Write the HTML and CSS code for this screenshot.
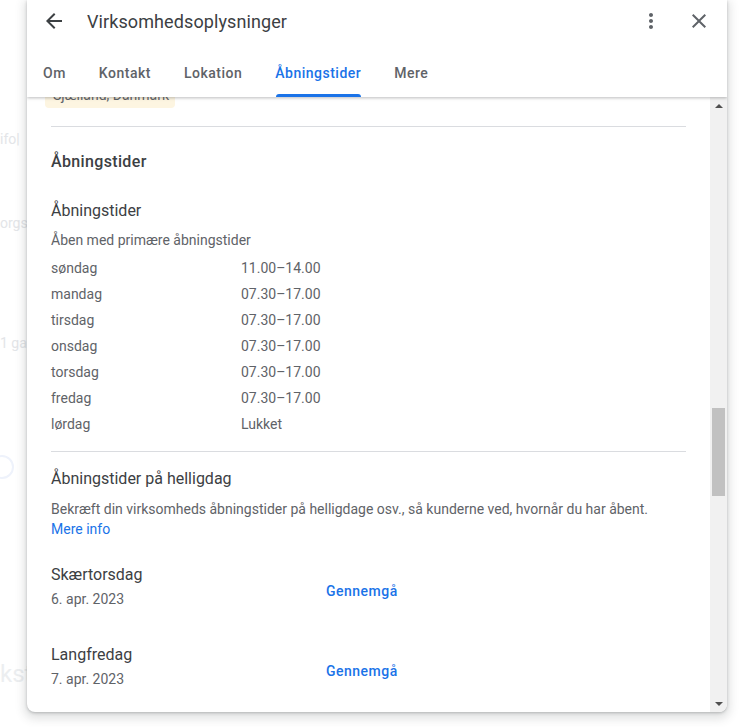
FILE: index.html
```html
<!DOCTYPE html>
<html lang="da">
<head>
<meta charset="utf-8">
<title>Virksomhedsoplysninger</title>
<link rel="stylesheet" href="styles.css">
</head>
<body>
<div class="backdrop">
  <span class="bg-text bg-1">ifo|</span>
  <span class="bg-text bg-2">orgs</span>
  <span class="bg-text bg-3">1 ga</span>
  <span class="bg-text bg-4">kst</span>
  <span class="bg-ring"></span>
</div>
<div class="dialog">
  <header class="head">
    <div class="toprow">
      <button class="icon-btn back" aria-label="Tilbage">
        <svg viewBox="0 0 24 24" width="24" height="24"><path d="M20 11H7.83l5.59-5.59L12 4l-8 8 8 8 1.41-1.41L7.830 13H20v-2z"/></svg>
      </button>
      <h1 class="title">Virksomhedsoplysninger</h1>
      <button class="icon-btn more" aria-label="Mere">
        <svg viewBox="0 0 24 24" width="24" height="24"><path d="M12 8c1.1 0 2-.9 2-2s-.9-2-2-2-2 .9-2 2 .9 2 2 2zm0 2c-1.1 0-2 .9-2 2s.9 2 2 2 2-.9 2-2-.9-2-2-2zm0 6c-1.1 0-2 .9-2 2s.9 2 2 2 2-.9 2-2-.9-2-2-2z"/></svg>
      </button>
      <button class="icon-btn close" aria-label="Luk">
        <svg viewBox="0 0 24 24" width="24" height="24"><path d="M19 6.41L17.59 5 12 10.59 6.41 5 5 6.41 10.59 12 5 17.59 6.41 19 12 13.41 17.59 19 19 17.59 13.41 12z"/></svg>
      </button>
    </div>
    <nav class="tabs">
      <span class="tab">Om</span>
      <span class="tab">Kontakt</span>
      <span class="tab">Lokation</span>
      <span class="tab active">Åbningstider</span>
      <span class="tab">Mere</span>
    </nav>
  </header>
  <div class="body">
    <div class="content">
      <div class="chip">Sjælland, Danmark</div>
      <hr class="divider first">
      <h2 class="section-title">Åbningstider</h2>
      <h3 class="sub-title">Åbningstider</h3>
      <p class="note">Åben med primære åbningstider</p>
      <div class="hours">
        <span>søndag</span><span>11.00–14.00</span>
        <span>mandag</span><span>07.30–17.00</span>
        <span>tirsdag</span><span>07.30–17.00</span>
        <span>onsdag</span><span>07.30–17.00</span>
        <span>torsdag</span><span>07.30–17.00</span>
        <span>fredag</span><span>07.30–17.00</span>
        <span>lørdag</span><span>Lukket</span>
      </div>
      <hr class="divider second">
      <h3 class="sub-title holiday-title">Åbningstider på helligdag</h3>
      <p class="desc">Bekræft din virksomheds åbningstider på helligdage osv., så kunderne ved, hvornår du har åbent.<br><a class="link" href="#">Mere info</a></p>
      <div class="holiday">
        <div class="h-info">
          <div class="h-name">Skærtorsdag</div>
          <div class="h-date">6. apr. 2023</div>
        </div>
        <button class="review">Gennemgå</button>
      </div>
      <div class="holiday second-h">
        <div class="h-info">
          <div class="h-name">Langfredag</div>
          <div class="h-date">7. apr. 2023</div>
        </div>
        <button class="review">Gennemgå</button>
      </div>
    </div>
    <div class="scrollbar">
      <span class="arrow up"></span>
      <div class="track"><div class="thumb"></div></div>
      <span class="arrow down"></span>
    </div>
  </div>
</div>
</body>
</html>
```

FILE: styles.css
```css
* { box-sizing: border-box; }
html, body { margin: 0; padding: 0; }
body {
  width: 742px;
  height: 727px;
  background: #ffffff;
  font-family: Roboto, "Noto Sans", Arial, sans-serif;
  position: relative;
  overflow: hidden;
}
.backdrop { position: absolute; inset: 0; }
.bg-text { position: absolute; color: #e3e5e8; font-size: 14px; }
.bg-1 { left: 0; top: 131px; }
.bg-2 { left: 0; top: 215px; }
.bg-3 { left: 0; top: 335px; }
.bg-4 { left: 0; top: 660px; font-size: 24px; color: #eceef0; }
.bg-ring { position: absolute; left: -10px; top: 455px; width: 24px; height: 24px; border: 2px solid #eef2fb; border-radius: 50%; }

.dialog {
  position: relative;
  margin-left: 27px;
  width: 700px;
  height: 712px;
  background: #fff;
  border-radius: 0 0 8px 8px;
  box-shadow: 0 1px 3px rgba(60,64,67,.3), 0 4px 10px 3px rgba(60,64,67,.15);
  display: flex;
  flex-direction: column;
  overflow: hidden;
}
.head {
  height: 97px;
  flex: none;
  background: #fff;
  position: relative;
  z-index: 2;
  box-shadow: 0 1px 3px rgba(60,64,67,.35);
}
.toprow {
  height: 42px;
  display: flex;
  align-items: center;
  padding-left: 15px;
  padding-right: 16px;
}
.icon-btn {
  border: 0;
  background: none;
  padding: 0;
  width: 24px;
  height: 24px;
  display: flex;
  fill: #3c4043;
}
.title {
  margin: 0 0 0 21px;
  font-size: 18px;
  font-weight: 400;
  color: #3c4043;
  flex: 1;
  letter-spacing: 0.1px;
}
.more { fill: #5f6368; margin-right: 24px; }
.close { fill: #5f6368; }
.tabs {
  margin-top: 7px;
  height: 48px;
  display: flex;
  gap: 33px;
  padding-left: 16px;
}
.tab {
  position: relative;
  display: flex;
  align-items: center;
  font-size: 14px;
  font-weight: 500;
  color: #5f6368;
  letter-spacing: 0.5px;
}
.tab.active { color: #1a73e8; }
.tab.active::after {
  content: "";
  position: absolute;
  left: 1px; right: 0; bottom: 0;
  height: 3px;
  background: #1a73e8;
  border-radius: 3px 3px 0 0;
}

.body {
  flex: 1;
  display: flex;
  min-height: 0;
}
.content {
  flex: 1;
  padding: 0 24px 0 24px;
  overflow: hidden;
  color: #3c4043;
}
.chip {
  margin-top: -13px;
  margin-left: -6px;
  width: 130px;
  height: 24px;
  line-height: 22px;
  background: #fdf5e1;
  border-radius: 4px;
  font-size: 14px;
  color: #5f6368;
  padding-left: 8px;
  white-space: nowrap;
}
.divider { border: 0; border-top: 1px solid #dadce0; margin: 0; }
.divider.first { margin-top: 18px; }
.section-title {
  margin: 23px 0 0;
  line-height: 24px;
  font-size: 16px;
  font-weight: 500;
  color: #3c4043;
  letter-spacing: 0.35px;
}
.sub-title {
  margin: 25px 0 0;
  line-height: 24px;
  font-size: 16px;
  font-weight: 400;
  color: #3c4043;
}
.note {
  margin: 7px 0 0;
  line-height: 20px;
  font-size: 14px;
  color: #5f6368;
}
.hours {
  margin-top: 5px;
  display: grid;
  grid-template-columns: 190px 1fr;
  line-height: 26px;
  font-size: 14px;
  color: #5f6368;
}
.divider.second { margin-top: 14px; }
.holiday-title { margin-top: 15px; }
.desc {
  margin: 8px 0 0;
  line-height: 20px;
  font-size: 14px;
  color: #5f6368;
}
.link { color: #1a73e8; text-decoration: none; }
.holiday {
  margin-top: 24px;
  display: flex;
  align-items: center;
}
.holiday.second-h { margin-top: 32px; }
.h-info { width: 267px; }
.h-name { line-height: 24px; font-size: 16px; color: #3c4043; }
.h-date { line-height: 24px; font-size: 14px; color: #5f6368; }
.review {
  margin-top: 8px;
  border: 0;
  background: none;
  padding: 0 8px;
  height: 32px;
  font-family: inherit;
  font-size: 14px;
  font-weight: 500;
  color: #1a73e8;
  letter-spacing: 0.5px;
}

.scrollbar {
  width: 17px;
  flex: none;
  background: #f1f1f1;
  display: flex;
  flex-direction: column;
  align-items: center;
}
.arrow { width: 0; height: 0; border-left: 4px solid transparent; border-right: 4px solid transparent; margin: 6px 0; }
.arrow.up { border-bottom: 4px solid #505050; margin-top: 7px; }
.arrow.down { border-top: 4px solid #505050; margin-bottom: 6px; }
.track { flex: 1; width: 100%; padding: 0 2px; }
.thumb { margin-top: 294px; height: 88px; background: #c1c1c1; }
```
